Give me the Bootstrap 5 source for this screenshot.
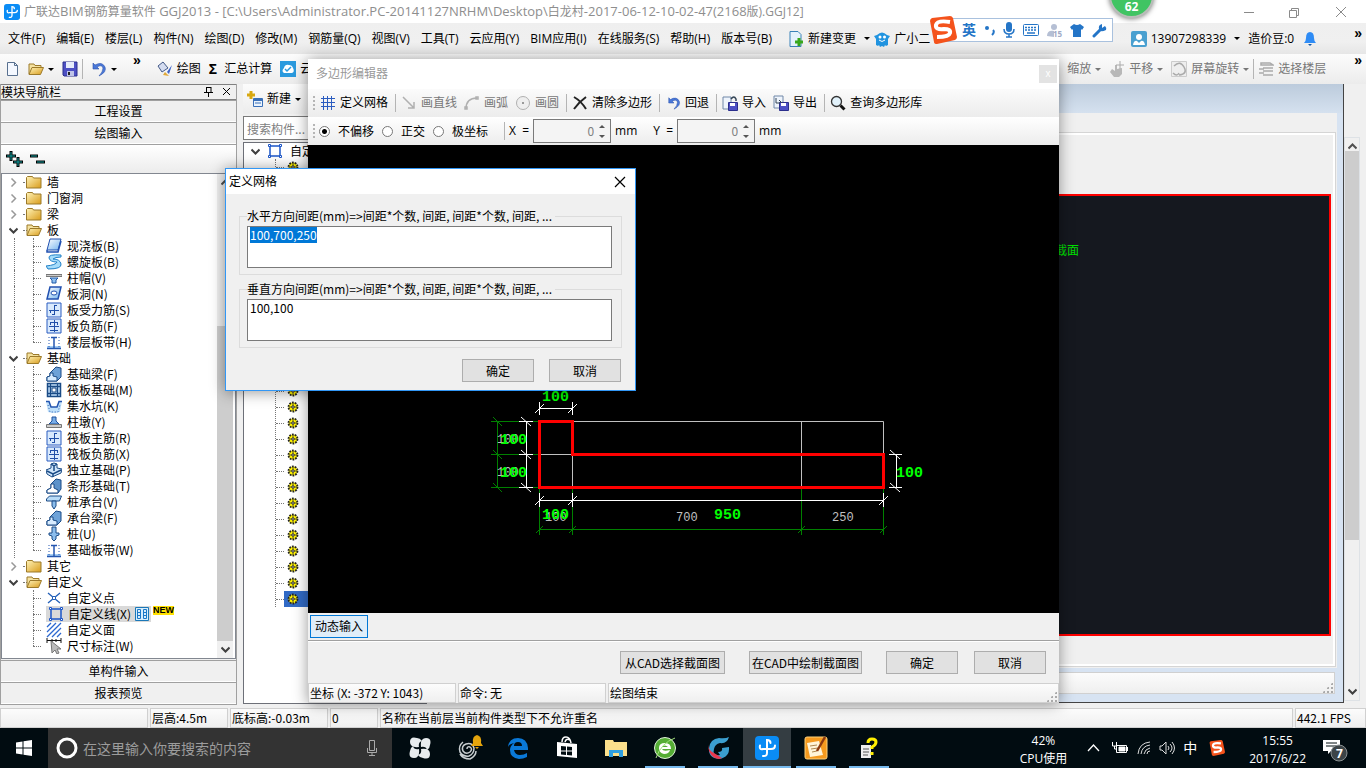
<!DOCTYPE html>
<html lang="zh-CN">
<head>
<meta charset="utf-8">
<meta name="viewport" content="width=device-width, initial-scale=1">
<title>广联达BIM钢筋算量软件 GGJ2013</title>
<link href="https://cdn.jsdelivr.net/npm/bootstrap@5.3.0/dist/css/bootstrap.min.css" rel="stylesheet">
<style>
:root{--line:#a0a0a0;--face:#f0f0f0}
body{font:12px/16px "Noto Sans CJK SC",sans-serif;color:#000;background:#f0f0f0}
.ui{font-family:"Open Sans","Noto Sans CJK SC",sans-serif}
svg{flex:none;display:block}
.ic{width:16px;height:16px}
button.tool,a.menu{border:0;background:none;padding:0;color:#000;font:inherit;line-height:16px;text-decoration:none;white-space:nowrap;display:flex;align-items:center;gap:4px}
button.tool:disabled,button.tool.dim{color:#777}
.caret{width:0;border:3px solid transparent;border-top-color:currentColor;border-bottom:0;flex:none}
.vsep{width:1px;align-self:stretch;background:#b4b4b4;margin:5px 0}
.titlebar{height:23px;background:#fff;color:#8e8e8e}
.titlebar .lat{font-size:13px}
.menubar{height:31px;background:linear-gradient(#efefef,#f0f0f0 60%,#e6e6e6)}
.menus{gap:11px}
.menuend{margin-left:36px}
.strip{height:30px;background:linear-gradient(#fcfcfc,#ececec)}
.more{font:bold 14px/12px "Liberation Sans",sans-serif}
.workspace{min-height:0}
.navi{width:237px;border:1px solid var(--line);border-top:0;margin-bottom:3px}
.navhead{height:16px;border:1px solid #808080;border-width:1px 0}
.navbtn{height:22px;border:0;border-top:1px solid var(--line);border-bottom:1px solid #fff;background:var(--face);font:inherit;line-height:16px;padding:0;width:100%}
.navtools{height:29px;background:linear-gradient(#fff,#ececec);border-top:1px solid var(--line)}
.treebox{border:1px solid #828790;background:#fff;min-height:0;margin-bottom:1px}
.tree,.tree ul{list-style:none;margin:0;padding:0}
.row16{height:16px;display:flex;align-items:center;white-space:nowrap}
.tree>li>.row16{padding-left:7px;gap:5px}
.tree>li>.row16::before{content:"";order:1;width:4px;border-top:1px dotted #777}
.tree>li>.row16>.ar{order:0;width:9px;height:9px}
.tree>li>.row16>.ic{order:2;margin-left:-6px}
.tree>li>.row16>span{order:3}
.tree li li{padding-left:31px;position:relative}
.tree li li>.row16{gap:5px}
.tree li li>.row16::before{content:"";width:8px;border-top:1px dotted #777}
.tree li li::after{content:"";position:absolute;left:31px;top:0;height:16px;border-left:1px dotted #777}
.tree li li:last-child::after{height:8px}
.tree li.thru li::before{content:"";position:absolute;left:12px;top:0;height:16px;border-left:1px dotted #777}
.picked{background:#d9d9d9;padding:0 2px;gap:4px}
.newtag{font:bold 9px/9px "Liberation Sans",sans-serif;background:#ffe000;align-self:flex-start;margin-left:-3px}
.sbar{width:16px;background:#f0f0f0;display:flex;flex-direction:column;align-items:center}
.navi .sbar{margin-right:2px}
.thumb{background:#cdcdcd;width:100%}
.comps{width:184px;margin-left:6px;margin-bottom:4px}
.comps input{border:1px solid #7a7a7a;height:24px;padding:0 3px;margin:2px 0;font:inherit;background:#fff}
.comps input::placeholder{color:#808080;opacity:1}
.comphead{padding-left:7px;gap:7px}
.complist{border:1px solid #6d7078;background:#fff;min-height:0;overflow:hidden}
.complist ul{list-style:none;margin:0 0 0 31px;padding:0;border-left:1px dotted #777}
.complist li{height:16px;display:flex;align-items:center;gap:1px}
.complist li::before{content:"";width:8px;border-top:1px dotted #777}
.complist li span{flex:1;height:16px}
.complist li.on{background:linear-gradient(#316ac5,#316ac5) no-repeat 8px 0}
.mdi{background:#d7e3f2;border:solid #444;border-width:0 1px 1px 0;margin-bottom:5px}
.mdihead{height:29px;background:linear-gradient(#bccbdc,#d5e1ef)}
.mdibody{background:#f0f0f0;margin-right:6px;padding:20px 2px 2px 0}
.mdibox{border:2px solid #fff;outline:1px solid #d5d5d5;padding:59px 2px 28px 0}
.view3d{border:2px solid #f00;background:#15181f;color:#00e000;padding:46px 250px 0 0;text-align:right}
.pane{border:1px solid #d0d0d0;background:linear-gradient(#fcfcfc,#efefef);height:20px;padding:0 1px;line-height:18px;white-space:nowrap}
.mdi .pane{height:22px}
.rail{width:22px;padding:53px 6px 7px 0}
.editor{position:absolute;left:308px;right:307px;top:59px;bottom:65px;background:#f0f0f0;box-shadow:0 1px 14px rgba(0,0,0,.42)}
.edhead{height:30px;background:#fff;color:#999;padding:0 2px 0 8px}
.edclose{width:18px;height:18px;border:0;background:#e3e3e3;color:#fff;font:10px/16px "Liberation Sans",sans-serif;padding:0}
.edtool{height:28px;background:linear-gradient(#fbfbfb,#ececec);gap:7px;padding:0 5px}
.edtool .tight{margin-left:-2px}
.grip{width:2px;height:14px;background:repeating-linear-gradient(#b5b5b5 0 2px,transparent 2px 4px)}
.edopts{height:28px;background:linear-gradient(#fff,#ececec);padding:0 5px}
.edopts input[type=radio]{appearance:none;width:11px;height:11px;border:1px solid #777;border-radius:50%;background:#fff;margin:0;flex:none}
.edopts input[type=radio]:checked{background:radial-gradient(#000 0 2px,#fff 3px)}
.edopts label{white-space:nowrap}
.num{width:78px;height:24px;border:1px solid #7a7a7a;background:#f4f4f4;display:flex;align-items:center}
.num input{border:0;background:none;width:60px;text-align:right;color:#808080;padding:0;font:inherit}
.num div{width:16px;display:flex;flex-direction:column;align-items:center;gap:7px}
.num button{border:3px solid transparent;border-top:0;border-bottom-color:#555;background:none;padding:0;width:0;height:3px}
.num button+button{border:3px solid transparent;border-bottom:0;border-top-color:#555}
.stage{background:#000;min-height:0}
.dynbar{height:28px;border-bottom:1px solid var(--line);padding:2px}
.dyn{border:1px solid #0078d7;background:#e0eef9;height:23px;padding:0 4px;font:inherit;line-height:20px}
.wbtn{border:1px solid #adadad;background:#e1e1e1;height:23px;width:72px;font:inherit;line-height:20px;padding:0;color:#000}
.wide1{width:105px}.wide2{width:113px}
.edfoot{height:42px;padding:0 13px 0 0;border-top:1px solid #fff}
.dots{width:11px;height:11px;background:radial-gradient(circle,#aaa 0 1px,transparent 1px) 0 0/4px 4px;clip-path:polygon(100% 0,100% 100%,0 100%)}
.dlg{position:absolute;left:225px;top:168px;width:411px;border:1px solid #3297f5;background:#f0f0f0;box-shadow:0 1px 14px rgba(0,0,0,.42)}
.dlghead{height:25px;background:#fff;padding:0 9px 0 3px;margin-bottom:14px}
.dlg fieldset{border:1px solid #dcdcdc;margin:0 13px 6px;padding:0 9px 6px 7px}
.dlg legend{float:none;width:auto;font:inherit;line-height:16px;margin:0 0 2px;padding:0 3px 0 0;white-space:nowrap}
.dlg textarea{display:block;width:100%;height:42px;border:1px solid #7a7a7a;padding:1px 2px;resize:none;font:12px/14px "Noto Sans CJK SC",sans-serif;background:#fff;outline:0;overflow:hidden}
.dlg textarea::selection{background:#0078d7;color:#fff}
.dlgfoot{gap:15px;padding:5px 14px 8px}
.bar62{position:absolute;left:1109px;top:-27px;width:45px;height:45px;border-radius:50%;background:#40c463;border:2px solid #b9bdb9;box-shadow:0 1px 5px rgba(0,0,0,.5);color:#fff;font:bold 12px/14px "Open Sans",sans-serif;display:flex;align-items:flex-end;justify-content:center;padding-bottom:2px}
.ime{position:absolute;left:929px;top:16px;z-index:3}
.imebar{height:24px;width:172px;border:1px solid #a9c1de;background:#fff;margin-left:-16px;padding:0 5px 0 20px;color:#2475c7;font-weight:bold;font-size:14px}
.taskbar{height:40px;background:#010c11;color:#fff}
.find{width:344px;background:#333;padding:0 14px 0 8px;gap:5px}
.find input{border:0;background:none;color:#a5a5a5;font:14px/20px "Noto Sans CJK SC",sans-serif;padding:0;outline:0}
.find input::placeholder{color:#9c9c9c;opacity:1}
.app{width:48px;height:40px;border:0;background:none;padding:0;display:flex;align-items:center;justify-content:center;border-bottom:2px solid transparent;border-top:2px solid transparent}
.app.run{border-bottom-color:#76b9ed;width:40px;margin:0 4px}
.app.now{background:#343d42;border-top-color:#343d42;border-bottom-color:#76b9ed}
.apps{gap:1px}
.two{line-height:18px;text-align:center;font-size:12px}
.cn14{font-size:14px}
.foot{height:20px;gap:2px}
</style>
</head>
<body class="vh-100 d-flex flex-column overflow-hidden position-relative">

<svg width="0" height="0" class="position-absolute" aria-hidden="true">
<defs>
<linearGradient id="gold" x1="0" y1="0" x2="1" y2="1"><stop offset="0" stop-color="#fff3b8"/><stop offset="1" stop-color="#d99c1b"/></linearGradient>
<linearGradient id="sky" x1="0" y1="0" x2="1" y2="1"><stop offset="0" stop-color="#fff"/><stop offset="1" stop-color="#74b4ee"/></linearGradient>
</defs>
<symbol id="logo" viewBox="0 0 24 24"><rect width="24" height="24" rx="4" fill="#0a8cf5"/><path d="M15.500 7q0-3-3.500-3v13q0 3.500-4 3M5 9.500Q4 14 8 13h8q4 0 4-3.500" fill="none" stroke="#fff" stroke-width="2" stroke-linecap="round"/></symbol>
<symbol id="closed" viewBox="0 0 16 16"><path d="M.5 3.500l1-1h5l1 1.500h7.500v10H.5z" fill="url(#gold)" stroke="#9c7a2a"/></symbol>
<symbol id="open" viewBox="0 0 16 16"><path d="M1 13V3h5l1 1.500h6V7" fill="#f5e2a0" stroke="#9c7a2a"/><path d="M1 13.500L4 6.500h11.500L12.500 13.500z" fill="url(#gold)" stroke="#9c7a2a"/></symbol>
<symbol id="down" viewBox="0 0 9 9"><path d="M.5 2.500l4 4 4-4" fill="none" stroke="#404040" stroke-width="2"/></symbol>
<symbol id="right" viewBox="0 0 9 9"><path d="M2.500.5l4 4-4 4" fill="none" stroke="#999" stroke-width="1.500"/></symbol>
<symbol id="up" viewBox="0 0 9 9"><path d="M.5 6.500l4-4 4 4" fill="none" stroke="#505050" stroke-width="2"/></symbol>
<symbol id="slab" viewBox="0 0 16 16"><path d="M4 1h11l-3 11H1z" fill="url(#sky)" stroke="#2050b0"/><path d="M1 12v2h11l3-11" fill="none" stroke="#2050b0" stroke-width="1.500"/></symbol>
<symbol id="spiral" viewBox="0 0 16 16"><path d="M15 1Q2 0 3 4t8 4Q10 11 0 12l2 3q14 0 13-5T7 5q2-2 8-2z" fill="#a5dcfa" stroke="#2080c8"/></symbol>
<symbol id="cap" viewBox="0 0 16 16"><path d="M0 4.500h16v2H0z" fill="#ccc" stroke="#777"/><path d="M4 8h8l-2 2v3H6v-3z" fill="#8fc0f0" stroke="#1c58a8"/></symbol>
<symbol id="hole" viewBox="0 0 16 16"><path d="M4 1h11l-3 12H1z" fill="url(#sky)" stroke="#2050b0" stroke-width="1.500"/><ellipse cx="8" cy="7" rx="3" ry="2" fill="#fff" stroke="#2050b0"/></symbol>
<symbol id="bar1" viewBox="0 0 16 16"><path d="M1 1h14v14H1z" fill="#d9eafd" stroke="#2b5cc0"/><path d="M8.500 3v10M3 8.500h10M4.500 8v3M11 3.500H8M6 12.500h3" fill="none" stroke="#204fa8"/></symbol>
<symbol id="bar2" viewBox="0 0 16 16"><path d="M1 1h14v14H1z" fill="#d9eafd" stroke="#2b5cc0"/><path d="M4 4.500h8M3 8.500h10M4 12.500h8M8.500 2v12M4.500 4v3M11.500 4v3" fill="none" stroke="#204fa8"/></symbol>
<symbol id="band" viewBox="0 0 16 16"><path d="M1 12h14v3H1z" fill="#a8d0f5"/><path d="M1 14.500h14M8 3v11M5 3.500h6" stroke="#2456b0" fill="none" stroke-width="1.500"/><path d="M3 3v11M13 3v11" stroke="#2456b0" stroke-dasharray="1 2"/></symbol>
<symbol id="beam" viewBox="0 0 16 16"><path d="M1 15v-4l3-1V7l6-6 5 1v9l-4 4z" fill="#6da2d8" stroke="#1a4b86"/><path d="M1 15v-4l3-1V7h3v3l4 1v4z" fill="#d8ecff" stroke="#1a4b86"/></symbol>
<symbol id="raft" viewBox="0 0 16 16"><path d="M1.500 1.500h13v13h-13z" fill="#bfdcf7" stroke="#1a4b86" stroke-width="1.500"/><path d="M4.500 1v14M11.500 1v14M1 4.500h14M1 11.500h14" stroke="#1a4b86" stroke-width="1.300"/><path d="M6 6h4v4H6z" fill="#fff" stroke="#1a4b86"/></symbol>
<symbol id="pit" viewBox="0 0 16 16"><path d="M0 3h3l2 6h6l2-6h3l-2 11q-6 2-12 0z" fill="#bfe0fa"/><path d="M0 3.500h3l2 5.500h6l2-5.500h3" fill="none" stroke="#2456b0" stroke-width="1.500"/><path d="M2 7l2 7h8l2-7" fill="none" stroke="#2456b0" stroke-dasharray="1 2"/></symbol>
<symbol id="pier" viewBox="0 0 16 16"><path d="M6 3h4v4l3 3H3l3-3z" fill="#79aee8" stroke="#1c4e9a"/><path d="M.5 10.500h15v3H.5z" fill="#ccc" stroke="#777"/></symbol>
<symbol id="iso" viewBox="0 0 16 16"><path d="M0 8l5-2V2l3-1 3 1v4l5 1-1 4-9 4-5-3z" fill="#cfe5fa" stroke="#1a4b86"/><path d="M5 2l3 2v5M11 2l-3 2M1 9l6 3 8-4M7 12v3" stroke="#1a4b86" fill="none" stroke-width="1.500"/></symbol>
<symbol id="stripf" viewBox="0 0 16 16"><path d="M1 15v-3l4-2V6l5-5 5 1v9l-3 4z" fill="#5c92ca" stroke="#1a4b86"/><path d="M1 15v-3l4-2V6h3v4l4 2v3z" fill="#fff" stroke="#1a4b86"/></symbol>
<symbol id="pilecap" viewBox="0 0 16 16"><path d="M.5 5l3-3h12l-2 5H.5z" fill="#b9dcf8" stroke="#1a4b86"/><path d="M6 7h4v5l-2 3-2-3z" fill="#8bbdec" stroke="#1a4b86"/></symbol>
<symbol id="pile" viewBox="0 0 16 16"><path d="M6 1h4v6h3v2l-3 1v3l-2 2-2-2v-3L3 9V7h3z" fill="#8bbdec" stroke="#1a4b86"/></symbol>
<symbol id="pt" viewBox="0 0 16 16"><path d="M2 3l12 10M14 3L2 13" stroke="#2360b8" stroke-width="1.300"/><path d="M6.500 6.500h3v3h-3z" fill="#fff" stroke="#2360b8"/></symbol>
<symbol id="box" viewBox="0 0 16 16"><path d="M3 3h10v10H3z" fill="none" stroke="#1b55c8" stroke-width="1.500"/><path d="M1.500 1.500h2v2h-2zM12.500 1.500h2v2h-2zM1.500 12.500h2v2h-2zM12.500 12.500h2v2h-2z" fill="#fff" stroke="#1b55c8"/></symbol>
<symbol id="hatch" viewBox="0 0 16 16"><path d="M1 5l4-4M1 10l9-9M1 15L15 1M6 15l9-9M11 15l4-4" stroke="#2b68d0" stroke-width="1.300"/></symbol>
<symbol id="dimn" viewBox="0 0 16 16"><path d="M1 0v5M15 0v5M1 2.500h14M6 1v3M10 1v3" stroke="#111" fill="none"/><path d="M5 3l10 8h-4l2 4-2 1-2-4-3 3z" fill="#bbb" stroke="#777"/></symbol>
<symbol id="gear" viewBox="0 0 12 12"><circle cx="6" cy="6" r="4.500" fill="#fff200" stroke="#222" stroke-width="1.800" stroke-dasharray="1.800 1"/><path d="M6 2v8M2 6h8" stroke="#333" stroke-width=".8"/><circle cx="6" cy="6" r="1.200" fill="#fff" stroke="#222"/></symbol>
<symbol id="undo" viewBox="0 0 16 16"><path d="M2 2v6h6L6 6q5-3 6 1 0 4-4 8 8-4 6-9Q11 0 4 4z" fill="#4a78d8" stroke="#2b52ad" stroke-width=".6"/></symbol>
<symbol id="disk" viewBox="0 0 16 16"><path d="M1 1h14v14H2l-1-1z" fill="#4d50c4" stroke="#2b2e8c"/><path d="M4 1h8v6H4z" fill="#e6ecfa"/><path d="M5 10h7v5H5z" fill="#bfc4e8"/><path d="M6 11h2v3H6z" fill="#222"/></symbol>
<symbol id="sogou" viewBox="0 0 28 28"><path d="M1 5q0-2 2-3l18-2q2 0 3 2l4 19q0 2-2 3L8 28q-3 0-3-2z" fill="#f4531c"/><path d="M21 6Q8 4 7 9t8 4q7 0 6 4t-13 4" fill="none" stroke="#fff" stroke-width="4"/></symbol>
</svg>

<header class="titlebar ui d-flex align-items-center px-1">
  <svg width="16" height="16" class="me-1"><use href="#logo"/></svg>
  <span class="flex-grow-1 text-nowrap">广联达<span class="lat">BIM</span>钢筋算量软件<span class="lat"> GGJ2013 - [C:\Users\Administrator.PC-20141127NRHM\Desktop\</span>白龙村<span class="lat">-2017-06-12-10-02-47(2168</span>版).GGJ12]</span>
  <svg width="112" height="16" viewBox="0 0 112 16" fill="none" stroke="#8a8a8a" class="me-2"><path d="M2 8.500h10M47.500 6.500h7v7h-7zM49.500 6V4.500h7v7H55M94 3l10 10M104 3L94 13"/></svg>
</header>

<nav class="menubar ui d-flex align-items-center ps-2 pe-1">
  <div class="menus d-flex">
    <a class="menu" href="#">文件(F)</a><a class="menu" href="#">编辑(E)</a><a class="menu" href="#">楼层(L)</a><a class="menu" href="#">构件(N)</a><a class="menu" href="#">绘图(D)</a><a class="menu" href="#">修改(M)</a><a class="menu" href="#">钢筋量(Q)</a><a class="menu" href="#">视图(V)</a><a class="menu" href="#">工具(T)</a><a class="menu" href="#">云应用(Y)</a><a class="menu" href="#">BIM应用(I)</a><a class="menu" href="#">在线服务(S)</a><a class="menu" href="#">帮助(H)</a><a class="menu" href="#">版本号(B)</a>
  </div>
  <a class="menu ms-3" href="#"><svg class="ic" viewBox="0 0 16 16"><path d="M2 .5h8l3 3v12H2z" fill="#e4f2fc" stroke="#3a82b8"/><path d="M11 7v8M7 11h8" stroke="#38a81c" stroke-width="3"/></svg>新建变更 <i class="caret ms-1"></i></a>
  <a class="menu ms-1 flex-grow-1" href="#"><svg class="ic" viewBox="0 0 16 16"><path d="M3 4q5-5 10 0l3 1-2 3v6l-2 1-1-1-1 2-2-1-2 1-1-2-1 1-2-1V8L0 5z" fill="#2194e0"/><circle cx="6" cy="6" r="1.500" fill="#fff"/><circle cx="10.500" cy="6" r="1.500" fill="#fff"/><path d="M5 9q3 3 6 0" stroke="#fff" fill="none"/></svg>广小二</a>
  <a class="menu" href="#"><svg class="ic" viewBox="0 0 16 16"><rect width="16" height="16" rx="2" fill="#4aa0d0"/><circle cx="8" cy="6" r="3" fill="#fff"/><path d="M2 14q1-5 4-4l2 2 2-2q3-1 4 4z" fill="#fff"/></svg>13907298339 <i class="caret ms-1"></i></a>
  <a class="menu ms-2" href="#">造价豆:0</a>
  <svg class="ic ms-2" viewBox="0 0 16 16"><path d="M8 1q4 0 4 6 0 3 2 5H2q2-2 2-5 0-6 4-6z" fill="#2f8cf5"/><path d="M6 13h4l-2 2z" fill="#1258a8"/></svg>
  <span class="more menuend align-self-start mt-1">»</span>
</nav>

<div class="strip ui d-flex align-items-center ps-1 pe-1">
  <button class="tool" aria-label="新建"><svg class="ic" viewBox="0 0 16 16"><path d="M3.500 1.500h7l3 3v10h-10z" fill="#f4f8ff" stroke="#58708f"/><path d="M10.500 1.500v3h3" fill="none" stroke="#58708f"/></svg></button>
  <button class="tool ms-2" aria-label="打开"><svg class="ic"><use href="#open"/></svg><i class="caret"></i></button>
  <button class="tool ms-2" aria-label="保存"><svg class="ic"><use href="#disk"/></svg></button>
  <i class="vsep ms-1"></i>
  <button class="tool ms-2" aria-label="撤销"><svg class="ic"><use href="#undo"/></svg><i class="caret"></i></button>
  <span class="more align-self-start mt-0 ms-3 me-2">»</span>
  <button class="tool ms-2"><svg class="ic" viewBox="0 0 16 16"><path d="M1 5l5-4 5 6-6 4z" fill="#d4dcf0" stroke="#445a88"/><path d="M15 4l-5 7 2 2z" fill="#3c62c8"/><path d="M8 11l4 4-6-1z" fill="#e0a838"/></svg>绘图</button>
  <button class="tool ms-2"><b class="cn14">Σ</b>&nbsp;汇总计算</button>
  <button class="tool ms-2"><svg class="ic" viewBox="0 0 16 16"><path d="M0 0h16v16H0z" fill="#2b9ade"/><path d="M4 12q-3-2 0-5 1-4 5-3 3 0 4 3 2 4-1 5z" fill="#fff"/><path d="M5 8l2 2 4-4" fill="none" stroke="#2b9ade" stroke-width="1.500"/></svg>云检查</button>
  <span class="flex-grow-1"></span>
  <button class="tool dim">缩放<i class="caret"></i></button>
  <button class="tool dim ms-2"><svg class="ic" viewBox="0 0 16 16"><path d="M3 8l3 2V4h2v4l5-1v6l-3 3H5L1 11z" fill="#b8b8b8"/><path d="M11 0v8M7 4h8" stroke="#aaa"/></svg>平移<i class="caret"></i></button>
  <button class="tool dim ms-2"><svg class="ic" viewBox="0 0 16 16"><path d="M.5.500h15v15H.500z" fill="#eee" stroke="#ccc"/><path d="M3 5q6-6 10 1t-5 8M2 12q4 4 6 0" fill="none" stroke="#aaa" stroke-width="1.500"/></svg>屏幕旋转<i class="caret"></i></button>
  <i class="vsep ms-1"></i>
  <button class="tool dim ms-1"><svg class="ic" viewBox="0 0 16 16"><path d="M3 2h9l3 2H3zM1 8h5M1 12h5M5 7h10M5 10h10M5 14h10" stroke="#aaa" fill="none" stroke-width="1.500"/></svg>选择楼层</button>
  <span class="more align-self-start mt-0 ms-4 ps-1">»</span>
</div>

<main class="workspace d-flex flex-grow-1">
  <aside class="navi d-flex flex-column">
    <div class="navhead d-flex align-items-center justify-content-between pe-1"><span>模块导航栏</span><svg width="30" height="12" viewBox="0 0 30 12" stroke="#000" fill="none"><path d="M4.500 1v5M9 1v5M4 1.500h5M2 6.500h9M6.500 7v4M21 2l7 7M28 2l-7 7"/></svg></div>
    <button class="navbtn">工程设置</button>
    <button class="navbtn">绘图输入</button>
    <div class="navtools d-flex align-items-center ps-1"><svg width="42" height="18" viewBox="0 0 42 18"><path d="M6 1v10M1 6h10M13 7v10M8 12h10M25 6h8M31 12h9" stroke="#000" stroke-width="3"/><path d="M6 2v8M2 6h8M13 8v8M9 12h8M26 6h6M32 12h7" stroke="#12a0a0"/></svg></div>
    <div class="treebox d-flex flex-grow-1 overflow-hidden">
      <ul class="tree flex-grow-1">
        <li><div class="row16"><svg class="ar"><use href="#right"/></svg><svg class="ic"><use href="#closed"/></svg><span>墙</span></div></li>
        <li><div class="row16"><svg class="ar"><use href="#right"/></svg><svg class="ic"><use href="#closed"/></svg><span>门窗洞</span></div></li>
        <li><div class="row16"><svg class="ar"><use href="#right"/></svg><svg class="ic"><use href="#closed"/></svg><span>梁</span></div></li>
        <li class="thru"><div class="row16"><svg class="ar"><use href="#down"/></svg><svg class="ic"><use href="#open"/></svg><span>板</span></div>
          <ul>
            <li><div class="row16"><svg class="ic"><use href="#slab"/></svg>现浇板(B)</div></li>
            <li><div class="row16"><svg class="ic"><use href="#spiral"/></svg>螺旋板(B)</div></li>
            <li><div class="row16"><svg class="ic"><use href="#cap"/></svg>柱帽(V)</div></li>
            <li><div class="row16"><svg class="ic"><use href="#hole"/></svg>板洞(N)</div></li>
            <li><div class="row16"><svg class="ic"><use href="#bar1"/></svg>板受力筋(S)</div></li>
            <li><div class="row16"><svg class="ic"><use href="#bar2"/></svg>板负筋(F)</div></li>
            <li><div class="row16"><svg class="ic"><use href="#band"/></svg>楼层板带(H)</div></li>
          </ul></li>
        <li class="thru"><div class="row16"><svg class="ar"><use href="#down"/></svg><svg class="ic"><use href="#open"/></svg><span>基础</span></div>
          <ul>
            <li><div class="row16"><svg class="ic"><use href="#beam"/></svg>基础梁(F)</div></li>
            <li><div class="row16"><svg class="ic"><use href="#raft"/></svg>筏板基础(M)</div></li>
            <li><div class="row16"><svg class="ic"><use href="#pit"/></svg>集水坑(K)</div></li>
            <li><div class="row16"><svg class="ic"><use href="#pier"/></svg>柱墩(Y)</div></li>
            <li><div class="row16"><svg class="ic"><use href="#bar1"/></svg>筏板主筋(R)</div></li>
            <li><div class="row16"><svg class="ic"><use href="#bar2"/></svg>筏板负筋(X)</div></li>
            <li><div class="row16"><svg class="ic"><use href="#iso"/></svg>独立基础(P)</div></li>
            <li><div class="row16"><svg class="ic"><use href="#stripf"/></svg>条形基础(T)</div></li>
            <li><div class="row16"><svg class="ic"><use href="#pilecap"/></svg>桩承台(V)</div></li>
            <li><div class="row16"><svg class="ic"><use href="#beam"/></svg>承台梁(F)</div></li>
            <li><div class="row16"><svg class="ic"><use href="#pile"/></svg>桩(U)</div></li>
            <li><div class="row16"><svg class="ic"><use href="#band"/></svg>基础板带(W)</div></li>
          </ul></li>
        <li><div class="row16"><svg class="ar"><use href="#right"/></svg><svg class="ic"><use href="#closed"/></svg><span>其它</span></div></li>
        <li><div class="row16"><svg class="ar"><use href="#down"/></svg><svg class="ic"><use href="#open"/></svg><span>自定义</span></div>
          <ul>
            <li><div class="row16"><svg class="ic"><use href="#pt"/></svg>自定义点</div></li>
            <li><div class="row16"><span class="row16 picked"><svg class="ic"><use href="#box"/></svg>自定义线(X)<svg width="14" height="14" viewBox="0 0 14 14"><path d="M.5.500h13v13H.500z" fill="#d8eefc" stroke="#1b78b8"/><path d="M2.500 2.500h3v9h-3zM8.500 2.500h3v9h-3zM2 5.500h4M2 8.500h4M8 5.500h4M8 8.500h4" fill="none" stroke="#1b78c8"/></svg></span><b class="newtag">NEW</b></div></li>
            <li><div class="row16"><svg class="ic"><use href="#hatch"/></svg>自定义面</div></li>
            <li><div class="row16"><svg class="ic"><use href="#dimn"/></svg>尺寸标注(W)</div></li>
          </ul></li>
      </ul>
      <div class="sbar py-1 justify-content-between"><svg width="9" height="9"><use href="#up"/></svg><i style="flex:140"></i><i class="thumb" style="flex:316"></i><svg width="9" height="9" class="mt-1"><use href="#down"/></svg></div>
    </div>
    <button class="navbtn">单构件输入</button>
    <button class="navbtn">报表预览</button>
  </aside>

  <section class="comps d-flex flex-column">
    <div class="strip ui d-flex align-items-center ps-1"><button class="tool"><svg class="ic" viewBox="0 0 16 16"><path d="M4 0v8M0 4h8" stroke="#d8a810" stroke-width="3"/><path d="M6.500 7.500h9v8h-9z" fill="#eaf3fd" stroke="#3a70b8"/><path d="M6 9h10" stroke="#3a70b8" stroke-width="2"/><path d="M8 12h6" stroke="#3a70b8"/></svg>新建<i class="caret"></i></button></div>
    <input type="text" placeholder="搜索构件..." aria-label="搜索构件">
    <div class="complist flex-grow-1">
      <div class="row16 comphead"><svg width="9" height="9"><use href="#down"/></svg><svg class="ic"><use href="#box"/></svg><span>自定义线</span></div>
      <ul>
        <li><svg class="ic" viewBox="-2 -2 16 16"><use href="#gear" width="12" height="12"/></svg><span></span></li>
      </ul>
    </div>
  </section>

  <section class="mdi flex-grow-1 d-flex flex-column">
    <div class="mdihead"></div>
    <div class="mdibody flex-grow-1 d-flex flex-column"><div class="mdibox flex-grow-1 d-flex"><div class="view3d flex-grow-1">自定义线截面</div></div></div>
    <div class="pane d-flex align-items-end justify-content-end me-2 mt-1 mb-2"><i class="dots"></i></div>
  </section>
  <aside class="rail d-flex flex-column"><div class="sbar py-1 flex-grow-1 border"><svg width="9" height="9"><use href="#up"/></svg><i class="thumb" style="flex:385"></i><i style="flex:145"></i><svg width="9" height="9"><use href="#down"/></svg></div></aside>
</main>

<footer class="foot d-flex">
  <div class="pane" style="width:148px"></div><div class="pane" style="width:78px">层高:4.5m</div><div class="pane" style="width:98px">底标高:-0.03m</div><div class="pane" style="width:48px">0</div><div class="pane flex-grow-1">名称在当前层当前构件类型下不允许重名</div><div class="pane" style="width:71px">442.1 FPS</div>
</footer>

<div class="taskbar ui d-flex">
  <button class="app" aria-label="开始"><svg width="16" height="16" viewBox="0 0 16 16" fill="#fff"><path d="M0 2.500L6.500 1.500v6H0zM7.500 1.300L16 0v7.500H7.500zM0 8.500h6.500v6L0 13.500zM7.500 8.500H16V16l-8.500-1.300z"/></svg></button>
  <label class="find d-flex align-items-center"><svg width="22" height="22" viewBox="0 0 22 22"><circle cx="11" cy="11" r="9" fill="none" stroke="#fff" stroke-width="3"/></svg><input class="flex-grow-1" type="text" placeholder="在这里输入你要搜索的内容"><svg width="12" height="18" viewBox="0 0 12 18" fill="none" stroke="#aaa"><path d="M3.500 1.500h5v10h-5zM1.500 9v4.500h9V9M6 14v3M3 16.500h6"/></svg></label>
  <div class="apps d-flex flex-grow-1 ps-1">
    <button class="app" aria-label="四叶"><svg width="22" height="22" viewBox="0 0 22 22" fill="#e8ecee"><path d="M10 10Q1 11 1 5t7-4q3 0 5 3-4 1-3 6zM12 10Q11 1 17 1t4 7q0 3-3 5-1-4-6-3zM12 12q9-1 9 5t-7 4q-3 0-5-3 4-1 3-6zM10 12q1 9-5 9t-4-7q0-3 3-5 1 4 6 3z"/></svg></button>
    <button class="app" aria-label="消息"><svg width="28" height="28" viewBox="0 0 28 28"><path d="M12 15q0-3 3-2 3 2 0 5-4 3-7-1-2-5 3-7 6-2 8 4 0 6-5 8-6 1-9-4-2-6 3-10M21 17q0 5-6 8-7 0-10-5" fill="none" stroke="#c8ced0" stroke-width="1.500"/><path d="M22 1q5 1 4 8l2 3H16l2-3q-1-7 4-8zM20 13h4l-2 2z" fill="#e5a50d"/></svg></button>
    <button class="app" aria-label="Edge"><svg width="22" height="22" viewBox="0 0 22 22"><path d="M1 10Q2 1 11 1q9 0 10 10v2H7q1 5 6 5 4 0 7-2v4q-4 2-8 2-9-1-9-9 0-4 4-7-5 1-6 4zM7 9h8q0-4-4-4t-4 4z" fill="#0a79d8"/></svg></button>
    <button class="app" aria-label="商店"><svg width="22" height="24" viewBox="0 0 22 24"><path d="M1 6l20 2v14L1 20z" fill="#fff"/><path d="M6 6q0-5 4-5t5 6M9 6q1-4 5-2" fill="none" stroke="#fff" stroke-width="1.500"/><path d="M5 10l5 .5v4H5zM11 10.500l5 .5v3.500h-5zM5 15.500h5V19l-5-.5zM11 15.500h5v4l-5-.5z" fill="#010c11"/></svg></button>
    <button class="app" aria-label="资源管理器"><svg width="22" height="20" viewBox="0 0 22 20"><path d="M0 2h8l1 2h13v14H0z" fill="#fbe08c"/><path d="M4 19v-7h14v7h-4v-4H8v4z" fill="#2f9fe0"/></svg></button>
    <button class="app run" aria-label="360浏览器"><svg width="24" height="24" viewBox="0 0 24 24"><circle cx="12" cy="12" r="10.500" fill="#55ad35" stroke="#dff2d8"/><path d="M6 12q0-5 6-5t6 6H9q1 3 8 1-1 4-6 4-5-1-5-6zM9 11h6q-3-3-6 0z" fill="#fff"/><path d="M3 22Q8 7 22 2" stroke="#a5e37f" fill="none"/></svg></button>
    <button class="app run ms-2" aria-label="广联达G"><svg width="24" height="24" viewBox="0 0 24 24"><path d="M23 1q-2 7-9 6-5 1-6 6-2 7 6 6l-2-3q5 0 4-4l7-1q1 10-10 12Q2 22 3 12 4 3 13 2q6 1 10-1z" fill="#3b9fd0"/><path d="M2 9q1 6 6 8l8 5-3 1Q3 22 2 9z" fill="#e8384f"/></svg></button>
    <button class="app now" aria-label="钢筋算量"><svg width="24" height="24"><use href="#logo"/></svg></button>
    <button class="app run" aria-label="笔记"><svg width="24" height="24" viewBox="0 0 24 24"><rect x="1" y="1" width="22" height="22" rx="2" fill="#f59a1e" stroke="#ffd27a"/><path d="M3 7l12-2 4 14-13 2z" fill="#fff4d8"/><path d="M6 10l7-1M7 13l7-1M8 16l5-1" stroke="#b08850"/><path d="M21 1l-8 14" stroke="#8c3a10" stroke-width="2.500"/></svg></button>
    <button class="app run ms-2" aria-label="帮助"><svg width="20" height="22" viewBox="0 0 20 22"><path d="M2 8h10v13H2z" fill="#eee"/><path d="M4 12h6M4 15h6M4 18h5" stroke="#555"/><path d="M9 6q0-4 4-4t4 3-4 5v2M13 15v3" fill="none" stroke="#ffee00" stroke-width="3"/></svg></button>
  </div>
  <div class="two me-3 pt-1">42%<br>CPU使用</div>
  <div class="d-flex align-items-center gap-2">
    <svg width="20" height="12" viewBox="0 0 20 12"><path d="M5 9l5.500-6L16 9" fill="none" stroke="#fff" stroke-width="1.300"/></svg>
    <svg width="18" height="16" viewBox="0 0 18 16" fill="none" stroke="#fff"><path d="M5.500 5.500h10v7h-10z"/><path d="M8 7h6v4H8z" fill="#fff"/><path d="M16.500 7v4M1.500 2v4h4V2M3.500 6v3h2"/></svg>
    <svg width="14" height="14" viewBox="0 0 14 14" fill="none" stroke="#ddd"><path d="M1 13Q2 2 13 1M4 13Q5 5 13 4M7 13q1-5 6-6M10 13q0-3 3-3" /></svg>
    <svg width="16" height="14" viewBox="0 0 16 14" fill="none" stroke="#ddd"><path d="M1 5h2l4-4v12L3 9H1zM9 5q2 2 0 4M11 3q4 4 0 8M13 1q5 6 0 12"/></svg>
    <span class="cn14">中</span>
    <svg width="16" height="16" class="ms-1"><use href="#sogou"/></svg>
  </div>
  <div class="two ms-4 me-3 pt-1">15:55<br>2017/6/22</div>
  <svg width="28" height="32" viewBox="0 0 28 32" class="align-self-center me-3"><path d="M1 8h17v11H9l-3 3v-3H1z" fill="#fff"/><path d="M4 11h11M4 14h11" stroke="#010c11"/><circle cx="17" cy="21" r="8" fill="#3c4447" stroke="#8a9092"/><text x="14" y="26" font-size="12" font-weight="bold" fill="#fff">7</text></svg>
</div>

<section class="editor d-flex flex-column" aria-label="多边形编辑器">
  <div class="edhead ui d-flex align-items-center justify-content-between"><span>多边形编辑器</span><button class="edclose" aria-label="关闭">x</button></div>
  <div class="edtool ui d-flex align-items-center">
    <i class="grip"></i>
    <button class="tool tight"><svg class="ic" viewBox="0 0 16 16"><path d="M3.500 1v14M7.500 1v14M11.500 1v14M1 3.500h14M1 7.500h14M1 11.500h14" stroke="#2b5cc0"/></svg>定义网格</button><i class="vsep"></i>
    <button class="tool tight" disabled><svg class="ic" viewBox="0 0 16 16" fill="none" stroke="#b0b0b0" stroke-width="1.500"><path d="M2 2l11 11M13 7v6H7"/></svg>画直线</button>
    <button class="tool" disabled><svg class="ic" viewBox="0 0 16 16" fill="none" stroke="#b0b0b0" stroke-width="1.500"><path d="M2 14Q2 3 13 3"/><path d="M12 2h2v2h-2zM1 12h2v2H1z"/></svg>画弧</button>
    <button class="tool" disabled><svg class="ic" viewBox="0 0 16 16"><circle cx="8" cy="8" r="6.500" fill="#eee" stroke="#b0b0b0"/><path d="M7 7h2v2H7z" fill="#999"/></svg>画圆</button><i class="vsep"></i>
    <button class="tool tight"><svg class="ic" viewBox="0 0 16 16"><path d="M2 2q7 4 12 12M14 2Q7 7 2 14" fill="none" stroke="#222" stroke-width="2"/></svg>清除多边形</button><i class="vsep"></i>
    <button class="tool"><svg width="14" height="16" viewBox="0 0 16 16"><use href="#undo" width="16" height="16"/></svg>回退</button><i class="vsep"></i>
    <button class="tool tight"><svg class="ic" viewBox="0 0 16 16"><path d="M1 2h8v12H1z" fill="#eef4fc" stroke="#7088a8"/><path d="M6.500 7.500h9v8h-9z" fill="#4d50c4" stroke="#2b2e8c"/><path d="M8 8h5v3H8z" fill="#fff"/><path d="M9 4q3-4 5 0v2" fill="none" stroke="#345" stroke-width="1.500"/></svg>导入</button>
    <button class="tool"><svg class="ic" viewBox="0 0 16 16"><path d="M1 1h9v12H1z" fill="#eef4fc" stroke="#7088a8"/><path d="M6.500 7.500h9v8h-9z" fill="#4d50c4" stroke="#2b2e8c"/><path d="M8 8h5v3H8z" fill="#fff"/><path d="M3 3v5h4M6 5l3 3" fill="none" stroke="#345"/></svg>导出</button><i class="vsep"></i>
    <button class="tool tight"><svg class="ic" viewBox="0 0 16 16"><circle cx="6.500" cy="6.500" r="5" fill="#e2f2fb" stroke="#333" stroke-width="1.300"/><path d="M10.500 10.500l4 4" stroke="#111" stroke-width="3"/></svg>查询多边形库</button>
  </div>
  <div class="edopts d-flex align-items-center">
    <i class="grip"></i>
    <input type="radio" name="off" id="r1" checked class="ms-1 me-2"><label for="r1">不偏移</label>
    <input type="radio" name="off" id="r2" class="ms-2 me-2"><label for="r2">正交</label>
    <input type="radio" name="off" id="r3" class="ms-2 me-2"><label for="r3">极坐标</label>
    <i class="vsep ms-3 me-1"></i>
    <label for="nx" class="ui">X&nbsp; =</label><div class="num ms-1 me-1"><input id="nx" class="ui" value="0" disabled><div><button aria-label="加"></button><button aria-label="减"></button></div></div><span class="ui">mm</span>
    <label for="ny" class="ui ms-3">Y&nbsp; =</label><div class="num ms-1 me-1"><input id="ny" class="ui" value="0" disabled><div><button aria-label="加"></button><button aria-label="减"></button></div></div><span class="ui">mm</span>
  </div>
  <div class="stage flex-grow-1">
    <svg width="100%" height="100%" viewBox="308 145 751 468" fill="none">
      <path d="M573 421.500h310.500v33M801.500 421v66M572.500 454v33M540 454.500h33" stroke="#c0c0c0"/>
      <path d="M497.500 421v67M491 421.500h48M491 454.500h48M491 487.500h48M493 417l9 9M493 450l9 9M493 483l9 9M539 529.500h345M539.500 488v47M572.500 488v47M801.500 488v47M883.500 488v47M536 533l7-7M569 533l7-7M798 533l7-7M880 533l7-7" stroke="#008000"/>
      <g font-family="'Liberation Mono',monospace" font-size="12" fill="#c0c0c0"><text x="497" y="443">100</text><text x="497" y="476">100</text><text x="545" y="521">100</text><text x="676" y="521">700</text><text x="832" y="521">250</text></g>
      <path d="M539 408.500h34M539.500 402v13M572.500 402v13M535 413l9-9M568 413l9-9M526.500 421v67M519 421.500h14M519 454.500h14M519 487.500h14M521 417l10 9M521 450l10 9M521 483l10 9M896.500 454v34M889 454.500h13M889 487.500h13M890 450l10 9M890 483l10 9M539 500.500h345M539.500 493v14M572.500 493v14M883.500 493v14M535 505l9-9M568 505l9-9M879 505l9-9" stroke="#fff"/>
      <path d="M539.500 421.500h33v33h311v33h-344z" stroke="#f00" stroke-width="3"/>
      <g font-family="'Liberation Mono',monospace" font-size="15" font-weight="bold" fill="#0f0"><text x="542" y="401">100</text><text x="500" y="444">100</text><text x="500" y="477">100</text><text x="896" y="477">100</text><text x="542" y="519">100</text><text x="714" y="519">950</text></g>
    </svg>
  </div>
  <div class="dynbar ui"><button class="dyn">动态输入</button></div>
  <div class="edfoot d-flex align-items-center justify-content-end">
    <button class="wbtn wide1">从CAD选择截面图</button><button class="wbtn wide2 ms-4">在CAD中绘制截面图</button><button class="wbtn ms-4">确定</button><button class="wbtn ms-3">取消</button>
  </div>
  <div class="foot d-flex"><div class="pane" style="width:148px">坐标 (X: -372 Y: 1043)</div><div class="pane" style="width:148px">命令: 无</div><div class="pane flex-grow-1 d-flex justify-content-between align-items-end"><span>绘图结束</span><i class="dots"></i></div></div>
</section>

<form class="dlg" onsubmit="return false">
  <div class="dlghead ui d-flex align-items-center justify-content-between"><span>定义网格</span><button type="button" class="tool" aria-label="关闭"><svg width="12" height="12" viewBox="0 0 12 12"><path d="M1 1l10 10M11 1L1 11" stroke="#000" stroke-width="1.200"/></svg></button></div>
  <fieldset><legend><label for="gx">水平方向间距(mm)=&gt;间距*个数, 间距, 间距*个数, 间距, ...</label></legend><textarea id="gx">100,700,250</textarea></fieldset>
  <fieldset><legend><label for="gy">垂直方向间距(mm)=&gt;间距*个数, 间距, 间距*个数, 间距, ...</label></legend><textarea id="gy">100,100</textarea></fieldset>
  <div class="dlgfoot d-flex justify-content-end"><button type="submit" class="wbtn">确定</button><button type="button" class="wbtn">取消</button></div>
</form>

<div class="bar62">62</div>
<div class="ime d-flex align-items-center">
  <svg width="28" height="28" class="position-relative"><use href="#sogou"/></svg>
  <div class="imebar d-flex align-items-center justify-content-between ui"><span>英</span>
    <svg width="12" height="14" viewBox="0 0 12 14"><circle cx="3" cy="5" r="2" fill="#2475c7"/><path d="M9 7q2 2-1 5" fill="none" stroke="#2475c7" stroke-width="2"/></svg>
    <svg width="12" height="16" viewBox="0 0 12 16"><rect x="3" width="6" height="10" rx="3" fill="#2475c7"/><path d="M1 7q0 5 5 5t5-5M6 12v3M3 15h6" fill="none" stroke="#2475c7" stroke-width="1.500"/></svg>
    <svg width="16" height="12" viewBox="0 0 16 12"><rect x=".5" y=".5" width="15" height="11" rx="1" fill="#fff" stroke="#2475c7"/><path d="M2 3.500h12M2 6h12" stroke="#2475c7" stroke-width="1.500" stroke-dasharray="2 1"/><path d="M4 9h8" stroke="#2475c7" stroke-width="1.500"/></svg>
    <svg width="16" height="15" viewBox="0 0 16 15"><circle cx="7" cy="4" r="3" fill="#b5bfd4"/><path d="M0 13q0-6 7-5v6z" fill="#b5bfd4"/><text x="6" y="14" font-size="8" fill="#9fabc6">15</text></svg>
    <svg width="14" height="13" viewBox="0 0 14 13"><path d="M4 0q3 2 6 0l4 3-2 3-1-1v8H3V5L2 6 0 3z" fill="#2475c7"/></svg>
    <svg width="15" height="15" viewBox="0 0 15 15"><path d="M2 13l7-7" stroke="#2475c7" stroke-width="3" stroke-linecap="round"/><path d="M13 3l-3 2V1Q6 2 7 6t7 1q1-2-1-4z" fill="#2475c7"/></svg>
  </div>
</div>

<script src="https://cdn.jsdelivr.net/npm/bootstrap@5.3.0/dist/js/bootstrap.bundle.min.js"></script>
<script>
// The component list holds 28 items; the last one is current.
const list = document.querySelector('.complist ul');
const first = list.firstElementChild;
for (let i = 1; i < 28; i++) list.appendChild(first.cloneNode(true));
list.lastElementChild.classList.add('on');
const gx = document.getElementById('gx');
gx.focus();
gx.select();
</script>
</body>
</html>
